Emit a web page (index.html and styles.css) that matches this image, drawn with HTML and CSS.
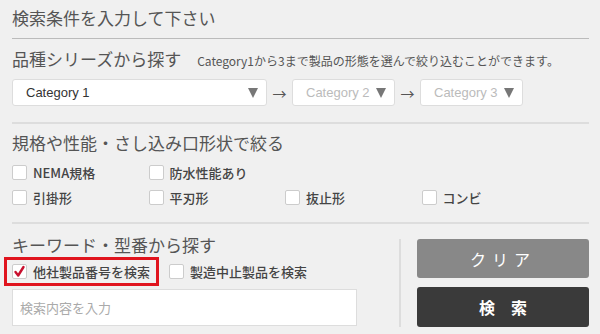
FILE: index.html
```html
<!DOCTYPE html>
<html lang="ja">
<head>
    <meta charset="UTF-8">
    <meta name="viewport" content="width=device-width, initial-scale=1.0">
    <title>検索条件</title>
    <link rel="stylesheet" href="styles.css">
</head>
<body>
    <div class="page">
        <h1 class="title">検索条件を入力して下さい</h1>

        <section class="block series">
            <div class="block-head">
                <h2>品種シリーズから探す</h2>
                <p class="note">Category1から3まで製品の形態を選んで絞り込むことができます。</p>
            </div>
            <div class="selects">
                <div class="select wide">Category 1<span class="tri"></span></div>
                <span class="arrow">→</span>
                <div class="select off">Category 2<span class="tri"></span></div>
                <span class="arrow">→</span>
                <div class="select off">Category 3<span class="tri"></span></div>
            </div>
        </section>

        <section class="block spec">
            <h2>規格や性能・さし込み口形状で絞る</h2>
            <div class="checks">
                <label class="check"><span class="box"></span>NEMA規格</label>
                <label class="check"><span class="box"></span>防水性能あり</label>
                <span></span>
                <span></span>
                <label class="check"><span class="box"></span>引掛形</label>
                <label class="check"><span class="box"></span>平刃形</label>
                <label class="check"><span class="box"></span>抜止形</label>
                <label class="check"><span class="box"></span>コンビ</label>
            </div>
        </section>

        <section class="search-row">
            <div class="keyword">
                <h2>キーワード・型番から探す</h2>
                <div class="opts">
                    <label class="check marked">
                        <span class="box">
                            <svg width="13" height="13" viewBox="0 0 13 13"><path d="M2.5 7 L5.2 10.5 L10.5 2" fill="none" stroke="#c8102e" stroke-width="2.4" stroke-linecap="round" stroke-linejoin="round"/></svg>
                        </span>他社製品番号を検索
                    </label>
                    <label class="check"><span class="box"></span>製造中止製品を検索</label>
                </div>
                <div class="input">検索内容を入力</div>
            </div>
            <div class="actions">
                <button class="btn clear">クリア</button>
                <button class="btn go">検　索</button>
            </div>
        </section>
    </div>
</body>
</html>
```

FILE: styles.css
```css
body {
    margin: 0;
    background-color: #f0f0f0;
    font-family: "Noto Sans CJK JP", "Liberation Sans", sans-serif;
    color: #555;
}
.page {
    padding: 0 11px 0 12px;
}
h1, h2, p {
    margin: 0;
    font-weight: 400;
}
.title {
    font-size: 17px;
    line-height: 24px;
    padding: 6px 0 8px;
    border-bottom: 1px solid #bbb;
}
h2 {
    font-size: 17px;
    line-height: 24px;
    color: #555;
}
.block {
    border-bottom: 2px solid #ddd;
}
.series {
    padding: 8px 0 16px;
}
.block-head {
    display: flex;
    align-items: baseline;
    gap: 16px;
}
.note {
    font-size: 12px;
    color: #555;
}
.selects {
    display: flex;
    align-items: center;
    margin-top: 8px;
}
.select {
    box-sizing: border-box;
    width: 103px;
    height: 27px;
    padding: 0 8px 0 13px;
    display: flex;
    align-items: center;
    justify-content: space-between;
    background-color: #fff;
    border: 1px solid #ddd;
    border-radius: 3px;
    font-family: "Liberation Sans", Arial, sans-serif;
    font-size: 13px;
    color: #333;
}
.select.wide {
    width: 255px;
}
.select.off {
    color: #bbb;
}
.tri {
    width: 0;
    height: 0;
    border-left: 5px solid transparent;
    border-right: 5px solid transparent;
    border-top: 10px solid #777;
}
.arrow {
    width: 25px;
    text-align: center;
    font-family: "Noto Sans CJK JP", sans-serif;
    font-size: 14px;
    line-height: 20px;
    color: #555;
}
.spec {
    padding: 7px 0 17px;
}
.checks {
    display: grid;
    grid-template-columns: repeat(4, 136.5px);
    row-gap: 10px;
    margin-top: 10px;
}
.check {
    display: flex;
    align-items: center;
    gap: 6px;
    height: 15px;
    font-size: 13px;
    font-weight: 500;
    color: #444;
    line-height: 15px;
}
.box {
    box-sizing: border-box;
    width: 15px;
    height: 15px;
    display: flex;
    align-items: center;
    justify-content: center;
    background-color: #fff;
    border: 1px solid #ccc;
    border-radius: 2px;
    flex: none;
}
.search-row {
    display: flex;
    padding-top: 9px;
}
.keyword {
    width: 387px;
}
.opts {
    display: flex;
    align-items: center;
    gap: 10px;
}
.check.marked {
    height: 23px;
    padding: 0 6px 0 5px;
    margin-left: -8px;
    border: 3px solid #e0141e;
}
.input {
    box-sizing: border-box;
    width: 345px;
    height: 37px;
    margin-top: 3px;
    padding: 0 7px;
    display: flex;
    align-items: center;
    background-color: #fff;
    border: 1px solid #ddd;
    font-size: 13px;
    color: #aaa;
}
.actions {
    display: flex;
    flex-direction: column;
    gap: 9px;
    width: 172px;
    margin-top: 6px;
    padding-left: 16px;
    border-left: 2px solid #ddd;
}
.btn {
    height: 39px;
    border: none;
    border-radius: 3px;
    color: #fff;
    font-family: "Noto Sans CJK JP", sans-serif;
    font-size: 16px;
}
.clear {
    background-color: #888;
    letter-spacing: 6px;
    padding-left: 6px;
}
.go {
    height: 40px;
    background-color: #3a3a3a;
    font-weight: 700;
}
```
